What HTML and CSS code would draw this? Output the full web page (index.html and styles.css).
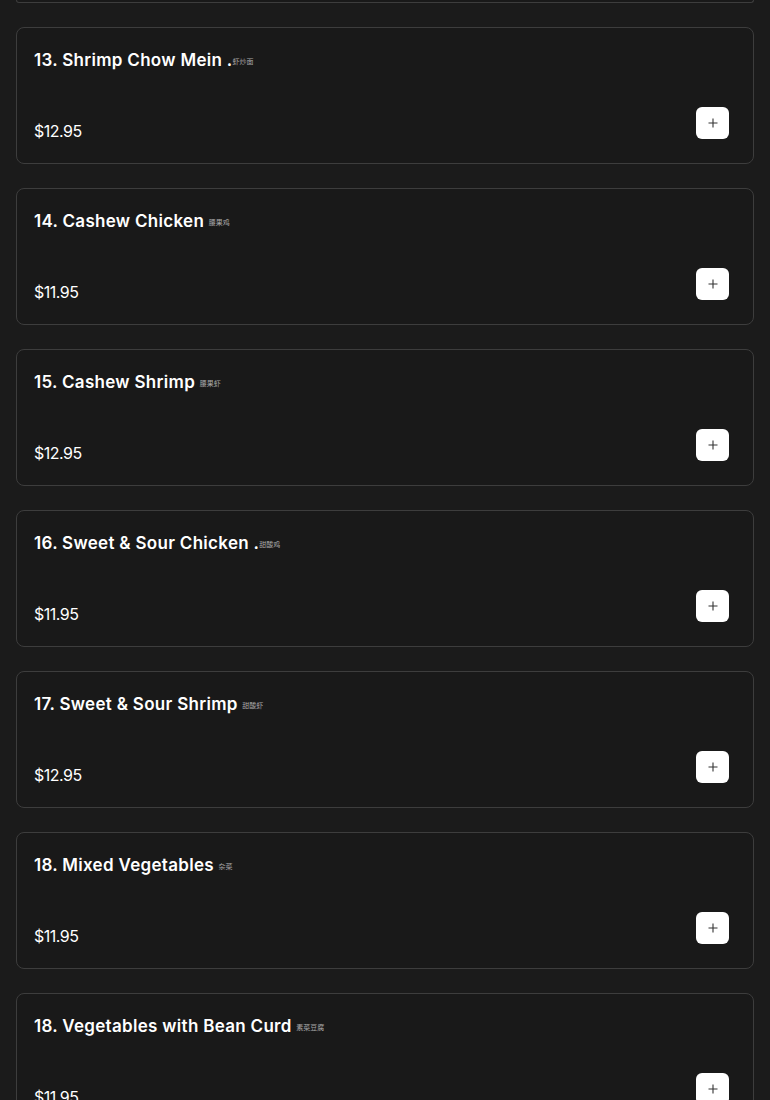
FILE: index.html
```html
<!DOCTYPE html>
<html lang="en">
<head>
<meta charset="utf-8">
<title>Menu</title>
<link rel="stylesheet" href="styles.css">
</head>
<body>
<main class="menu">
  <div class="card-tail"></div>
  <div class="card">
    <h3 class="name">13. Shrimp Chow Mein .<span class="cjk">虾炒面</span></h3>
    <div class="row"><span class="price">$12.95</span><button class="add" aria-label="Add"><svg viewBox="0 0 12 12" width="12" height="12"><path d="M6 1.5v9M1.5 6h9" stroke="#333" stroke-width="1.1" fill="none"/></svg></button></div>
  </div>
  <div class="card">
    <h3 class="name">14. Cashew Chicken <span class="cjk">腰果鸡</span></h3>
    <div class="row"><span class="price">$11.95</span><button class="add" aria-label="Add"><svg viewBox="0 0 12 12" width="12" height="12"><path d="M6 1.5v9M1.5 6h9" stroke="#333" stroke-width="1.1" fill="none"/></svg></button></div>
  </div>
  <div class="card">
    <h3 class="name">15. Cashew Shrimp <span class="cjk">腰果虾</span></h3>
    <div class="row"><span class="price">$12.95</span><button class="add" aria-label="Add"><svg viewBox="0 0 12 12" width="12" height="12"><path d="M6 1.5v9M1.5 6h9" stroke="#333" stroke-width="1.1" fill="none"/></svg></button></div>
  </div>
  <div class="card">
    <h3 class="name">16. Sweet &amp; Sour Chicken .<span class="cjk">甜酸鸡</span></h3>
    <div class="row"><span class="price">$11.95</span><button class="add" aria-label="Add"><svg viewBox="0 0 12 12" width="12" height="12"><path d="M6 1.5v9M1.5 6h9" stroke="#333" stroke-width="1.1" fill="none"/></svg></button></div>
  </div>
  <div class="card">
    <h3 class="name">17. Sweet &amp; Sour Shrimp <span class="cjk">甜酸虾</span></h3>
    <div class="row"><span class="price">$12.95</span><button class="add" aria-label="Add"><svg viewBox="0 0 12 12" width="12" height="12"><path d="M6 1.5v9M1.5 6h9" stroke="#333" stroke-width="1.1" fill="none"/></svg></button></div>
  </div>
  <div class="card">
    <h3 class="name">18. Mixed Vegetables <span class="cjk">杂菜</span></h3>
    <div class="row"><span class="price">$11.95</span><button class="add" aria-label="Add"><svg viewBox="0 0 12 12" width="12" height="12"><path d="M6 1.5v9M1.5 6h9" stroke="#333" stroke-width="1.1" fill="none"/></svg></button></div>
  </div>
  <div class="card">
    <h3 class="name">18. Vegetables with Bean Curd <span class="cjk">素菜豆腐</span></h3>
    <div class="row"><span class="price">$11.95</span><button class="add" aria-label="Add"><svg viewBox="0 0 12 12" width="12" height="12"><path d="M6 1.5v9M1.5 6h9" stroke="#333" stroke-width="1.1" fill="none"/></svg></button></div>
  </div>
</main>
</body>
</html>
```
FILE: styles.css
```css
* { box-sizing: border-box; }
html, body {
  margin: 0;
  padding: 0;
  background: #1b1b1b;
  color: #ffffff;
  font-family: "Inter", "Noto Sans", sans-serif;
}
.menu {
  display: flex;
  flex-direction: column;
  gap: 24px;
  padding: 0 16px;
}
.card-tail {
  height: 3px;
  border: 1px solid #3d3d3d;
  border-top: none;
  border-radius: 0 0 8px 8px;
  background: #191919;
}
.card {
  height: 137px;
  border: 1px solid #3d3d3d;
  border-radius: 8px;
  background: #191919;
  padding: 20px 24px 24px 17px;
  display: flex;
  flex-direction: column;
  justify-content: space-between;
}
.name {
  margin: 0;
  font-size: 17px;
  line-height: 24px;
  font-weight: 600;
  letter-spacing: 0.3px;
}
.cjk {
  font-family: "Noto Sans CJK SC", sans-serif;
  font-size: 7px;
  font-weight: 400;
  color: #a8a8a8;
  letter-spacing: 0;
  vertical-align: 2px;
}
.row {
  display: flex;
  justify-content: space-between;
  align-items: flex-end;
}
.price {
  font-size: 16px;
  line-height: 20px;
  font-weight: 400;
  letter-spacing: -0.5px;
  margin-bottom: -2px;
}
.add {
  width: 33px;
  height: 32px;
  border: none;
  border-radius: 6px;
  background: #ffffff;
  display: flex;
  align-items: center;
  justify-content: center;
  padding: 0;
}
.add svg { display: block; }
```
